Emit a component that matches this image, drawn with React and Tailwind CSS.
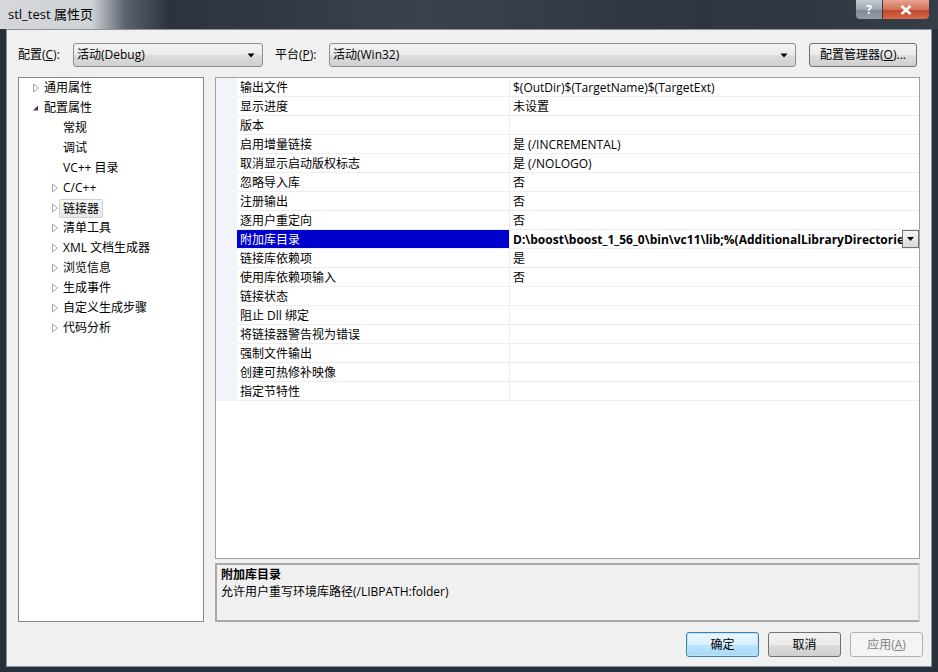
import React from "react";

const props = [
  { name: "输出文件", value: "$(OutDir)$(TargetName)$(TargetExt)" },
  { name: "显示进度", value: "未设置" },
  { name: "版本", value: "" },
  { name: "启用增量链接", value: "是 (/INCREMENTAL)" },
  { name: "取消显示启动版权标志", value: "是 (/NOLOGO)" },
  { name: "忽略导入库", value: "否" },
  { name: "注册输出", value: "否" },
  { name: "逐用户重定向", value: "否" },
  { name: "附加库目录", value: "D:\\boost\\boost_1_56_0\\bin\\vc11\\lib;%(AdditionalLibraryDirectories)", selected: true },
  { name: "链接库依赖项", value: "是" },
  { name: "使用库依赖项输入", value: "否" },
  { name: "链接状态", value: "" },
  { name: "阻止 Dll 绑定", value: "" },
  { name: "将链接器警告视为错误", value: "" },
  { name: "强制文件输出", value: "" },
  { name: "创建可热修补映像", value: "" },
  { name: "指定节特性", value: "" },
];

const tree = [
  { label: "通用属性", level: 1, arrow: "closed" },
  { label: "配置属性", level: 1, arrow: "open" },
  { label: "常规", level: 2 },
  { label: "调试", level: 2 },
  { label: "VC++ 目录", level: 2 },
  { label: "C/C++", level: 2, arrow: "closed" },
  { label: "链接器", level: 2, arrow: "closed", selected: true },
  { label: "清单工具", level: 2, arrow: "closed" },
  { label: "XML 文档生成器", level: 2, arrow: "closed" },
  { label: "浏览信息", level: 2, arrow: "closed" },
  { label: "生成事件", level: 2, arrow: "closed" },
  { label: "自定义生成步骤", level: 2, arrow: "closed" },
  { label: "代码分析", level: 2, arrow: "closed" },
];

function Arrow({ kind }) {
  if (kind === "open") {
    return (
      <svg width="8" height="8" viewBox="0 0 8 8">
        <path d="M6 1.5 L6 6.5 L1 6.5 Z" fill="#3c3c3c" />
      </svg>
    );
  }
  return (
    <svg width="8" height="10" viewBox="0 0 8 10">
      <path d="M1.5 1 L6.5 5 L1.5 9 Z" fill="none" stroke="#a6a6a6" strokeWidth="1" />
    </svg>
  );
}

function DownArrow() {
  return (
    <svg width="8" height="5" viewBox="0 0 8 5">
      <path d="M0.5 0.5 L7.5 0.5 L4 4.5 Z" fill="#000" />
    </svg>
  );
}

function Combo({ text, width }) {
  return (
    <div
      className={`${width} shrink-0 h-[24px] flex items-center justify-between pl-[3px] pr-[7px] rounded-[3px] border border-[#8e8f8f] bg-[linear-gradient(#f2f2f2,#ebebeb_50%,#dddddd_51%,#cfcfcf)] text-[12px] text-black`}
    >
      <span>{text}</span>
      <DownArrow />
    </div>
  );
}

function App() {
  return (
    <div className="w-[938px] h-[672px] bg-[#27303b] flex flex-col font-['Open_Sans','Noto_Sans_CJK_SC',sans-serif] text-[12px] overflow-hidden">
      {/* title bar */}
      <div className="h-[29px] flex items-start justify-between bg-[linear-gradient(90deg,#d5d7da_0px,#cfd2d6_92px,#5b636d_125px,#2c333d_170px,#3a424c_420px,#2e353f_700px,#353d47_938px)] shrink-0">
        <div className="pl-[8px] pt-[5px] text-[13px] leading-[18px] text-black">stl_test 属性页</div>
        <div className="flex mr-[8px] rounded-b-[5px] border border-t-0 border-[#3b3f45] overflow-hidden h-[20px]">
          <div className="w-[27px] h-full bg-[linear-gradient(#c5cbd2,#9ea6b0_50%,#7f8894_51%,#939ca7)] flex items-center justify-center text-white text-[12px] font-bold border-r border-[#3b3f45]">
            ?
          </div>
          <div className="w-[46px] h-full bg-[linear-gradient(#e8a493,#d3715a_50%,#c0452b_51%,#d46a4c)] flex items-center justify-center">
            <svg width="12" height="10" viewBox="0 0 12 10">
              <path d="M1.5 1 L10.5 9 M10.5 1 L1.5 9" stroke="#fff" strokeWidth="2.4" />
            </svg>
          </div>
        </div>
      </div>

      {/* client area */}
      <div className="flex-1 mx-[6px] mb-[5px] border border-[#8a939e] bg-[#f0f0f0] flex flex-col px-[11px] pt-[13px] pb-[8px]">
        {/* top row */}
        <div className="flex items-center h-[24px]">
          <span className="w-[55px] shrink-0 text-black">
            配置(<span className="underline">C</span>):
          </span>
          <Combo text="活动(Debug)" width="w-[190px]" />
          <span className="ml-[12px] w-[54px] shrink-0 text-black">
            平台(<span className="underline">P</span>):
          </span>
          <Combo text="活动(Win32)" width="w-[467px]" />
          <div className="ml-[13px] w-[108px] shrink-0 h-[24px] rounded-[3px] border border-[#707070] bg-[linear-gradient(#f2f2f2,#ebebeb_50%,#dddddd_51%,#cfcfcf)] flex items-center justify-center text-black">
            配置管理器(<span className="underline">O</span>)...
          </div>
        </div>

        {/* panels */}
        <div className="flex mt-[10px] gap-[11px]">
          {/* tree */}
          <div className="w-[186px] shrink-0 h-[545px] bg-white border border-[#828790] flex flex-col">
            {tree.map((t, i) => (
              <div key={i} className="h-[20px] flex items-center text-black">
                <div className={`${t.level === 1 ? "w-[25px] pl-[13px]" : "w-[44px] pl-[32px]"} shrink-0 flex items-center`}>
                  {t.arrow && <Arrow kind={t.arrow} />}
                </div>
                <span
                  className={
                    t.selected
                      ? "-ml-[4px] px-[3px] h-[19px] leading-[17px] rounded-[2px] border border-[#d0d0d0] bg-[linear-gradient(#f8f8f8,#e6e6e6)]"
                      : ""
                  }
                >
                  {t.label}
                </span>
              </div>
            ))}
          </div>

          {/* right side */}
          <div className="flex-1 min-w-0 flex flex-col gap-[4px]">
            <div className="h-[482px] bg-white border border-[#a0a0a0] flex items-start">
              <div className="w-[21px] shrink-0 h-[323px] bg-[#f1f4fa]" />
              <div className="flex-1 min-w-0 flex flex-col">
                {props.map((p, i) => (
                  <div key={i} className="h-[19px] flex">
                    <div
                      className={`w-[273px] h-[19px] shrink-0 pl-[3px] leading-[20px] overflow-hidden border-b border-r border-[#eeeeee] ${
                        p.selected ? "bg-[#0000cd] text-white" : "text-black"
                      }`}
                    >
                      {p.name}
                    </div>
                    <div className="flex-1 min-w-0 h-[19px] flex items-start border-b border-[#eeeeee]">
                      <div
                        className={`flex-1 min-w-0 h-[18px] pl-[3px] leading-[20px] whitespace-nowrap overflow-hidden ${
                          p.selected ? "font-bold text-black" : "text-black"
                        }`}
                      >
                        {p.value}
                      </div>
                      {p.selected && (
                        <div className="w-[17px] shrink-0 h-[18px] border border-[#707070] bg-[linear-gradient(#f4f4f4,#dcdcdc)] flex items-center justify-center">
                          <svg width="7" height="4" viewBox="0 0 7 4">
                            <path d="M0 0 L7 0 L3.5 4 Z" fill="#000" />
                          </svg>
                        </div>
                      )}
                    </div>
                  </div>
                ))}
              </div>
            </div>
            <div className="h-[59px] border-2 border-[#a8a8a8] border-r-[#d8d8d8] border-b-[#a8a8a8] bg-[#f0f0f0] px-[4px] pt-[1px] text-black">
              <div className="font-bold leading-[17px]">附加库目录</div>
              <div className="leading-[17px]">允许用户重写环境库路径(/LIBPATH:folder)</div>
            </div>
          </div>
        </div>

        {/* buttons */}
        <div className="flex justify-end gap-[9px] mt-[10px] -mr-[3px]">
          <div className="w-[73px] h-[25px] rounded-[3px] border border-[#3c7fb1] bg-[linear-gradient(#eaf6fd,#d9f0fc_50%,#bee6fd_51%,#a7d9f5)] shadow-[inset_0_0_0_1px_#bde4f7] flex items-center justify-center text-black">
            确定
          </div>
          <div className="w-[73px] h-[25px] rounded-[3px] border border-[#707070] bg-[linear-gradient(#f2f2f2,#ebebeb_50%,#dddddd_51%,#cfcfcf)] flex items-center justify-center text-black">
            取消
          </div>
          <div className="w-[73px] h-[25px] rounded-[3px] border border-[#adb2b5] bg-[#f4f4f4] flex items-center justify-center text-[#838383]">
            应用(<span className="underline">A</span>)
          </div>
        </div>
      </div>
    </div>
  );
}

export default App;
